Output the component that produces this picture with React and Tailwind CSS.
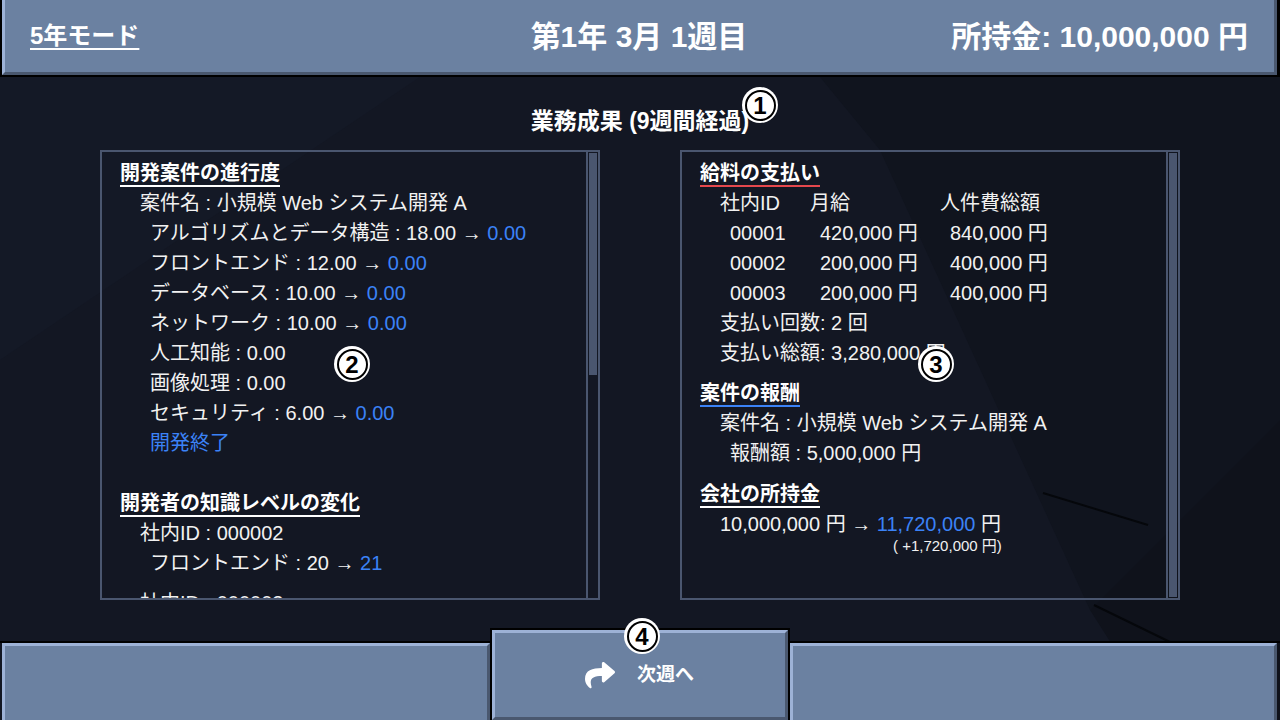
import { FaShare } from 'react-icons/fa';

const BLUE = 'text-[#3b82f6]';

function Heading({ children, line }) {
  return (
    <span className={`font-bold text-white underline decoration-2 underline-offset-[5px] ${line}`}>
      {children}
    </span>
  );
}

function Marker({ n, className }) {
  return (
    <div className={`absolute z-20 w-[36px] h-[36px] rounded-full bg-white flex items-center justify-center ${className}`}>
      <div className="w-[31px] h-[31px] rounded-full border-[2.5px] border-black flex items-center justify-center text-black font-bold text-[24px] leading-none pt-[1px]">
        {n}
      </div>
    </div>
  );
}

function Scrollbar({ thumb }) {
  return (
    <div className="w-[12px] border-l-2 border-[#4a566f] p-[1px] flex flex-col">
      <div className={`bg-[#4a566f] ${thumb}`}></div>
    </div>
  );
}

export default function App() {
  return (
    <div className="relative w-[1280px] h-[720px] overflow-hidden bg-[#131723] font-['Liberation_Sans','Noto_Sans_CJK_JP',sans-serif] flex flex-col">
      {/* background shapes */}
      <svg className="absolute inset-0 z-0" width="1280" height="720" viewBox="0 0 1280 720">
        <polygon points="820,77 1280,77 1280,420 1090,610 880,150" fill="#10141e" />
        <polygon points="1090,610 1280,420 1280,720 1160,720" fill="#0f121b" />
        <polygon points="0,77 420,77 0,360" fill="#141926" />
        <line x1="1043" y1="493" x2="1148" y2="525" stroke="#05070b" strokeWidth="2" />
        <line x1="1094" y1="605" x2="1170" y2="642" stroke="#05070b" strokeWidth="2" />
      </svg>

      {/* header */}
      <div className="relative z-10 h-[77px] bg-black pl-[2px] pr-[3px] pb-[2px]">
        <div className="h-full bg-[#6b81a1] border-l-[3px] border-l-[#9db2d6] border-r-[3px] border-r-[#4a586f] border-b-[3px] border-b-[#4a586f] grid grid-cols-3 items-center pl-[25px] pr-[26px] text-white font-bold">
          <span className="justify-self-start text-[24px] underline decoration-2 underline-offset-[4px]">5年モード</span>
          <span className="justify-self-center text-[30px]">第1年 3月 1週目</span>
          <span className="justify-self-end text-[30px]">所持金: 10,000,000 円</span>
        </div>
      </div>

      {/* main */}
      <div className="relative z-10 flex-1 flex flex-col items-center">
        <div className="mt-[30px] text-[23px] leading-[28px] font-bold text-white">業務成果 (9週間経過)</div>

        <div className="mt-[15px] flex gap-[80px]">
          {/* 開発案件 */}
          <div className="w-[500px] h-[450px] border-2 border-[#4a566f] flex">
            <div className="flex-1 overflow-hidden pl-[18px] pt-[6px] text-[20px] leading-[30px] text-[#f1f1f1]">
              <div><Heading line="decoration-white">開発案件の進行度</Heading></div>
              <div className="pl-[20px]">案件名 : 小規模 Web システム開発 A</div>
              <div className="pl-[30px]">アルゴリズムとデータ構造 : 18.00 → <span className={BLUE}>0.00</span></div>
              <div className="pl-[30px]">フロントエンド : 12.00 → <span className={BLUE}>0.00</span></div>
              <div className="pl-[30px]">データベース : 10.00 → <span className={BLUE}>0.00</span></div>
              <div className="pl-[30px]">ネットワーク : 10.00 → <span className={BLUE}>0.00</span></div>
              <div className="pl-[30px]">人工知能 : 0.00</div>
              <div className="pl-[30px]">画像処理 : 0.00</div>
              <div className="pl-[30px]">セキュリティ : 6.00 → <span className={BLUE}>0.00</span></div>
              <div className={`pl-[30px] ${BLUE}`}>開発終了</div>
              <div className="mt-[30px]"><Heading line="decoration-white">開発者の知識レベルの変化</Heading></div>
              <div className="pl-[20px]">社内ID : 000002</div>
              <div className="pl-[30px]">フロントエンド : 20 → <span className={BLUE}>21</span></div>
              <div className="pl-[20px] mt-[10px]">社内ID : 000003</div>
              <div className="pl-[30px]">フロントエンド : 10 → <span className={BLUE}>11</span></div>
            </div>
            <Scrollbar thumb="h-[222px]" />
          </div>

          {/* 支払い */}
          <div className="w-[500px] h-[450px] border-2 border-[#4a566f] flex">
            <div className="flex-1 overflow-hidden pl-[18px] pt-[6px] text-[20px] leading-[30px] text-[#f1f1f1]">
              <div><Heading line="decoration-[#e5484d]">給料の支払い</Heading></div>
              <div className="pl-[20px] grid grid-cols-[90px_130px_1fr]">
                <span>社内ID</span>
                <span>月給</span>
                <span>人件費総額</span>
                <span className="pl-[10px]">00001</span>
                <span className="pl-[10px]">420,000 円</span>
                <span className="pl-[10px]">840,000 円</span>
                <span className="pl-[10px]">00002</span>
                <span className="pl-[10px]">200,000 円</span>
                <span className="pl-[10px]">400,000 円</span>
                <span className="pl-[10px]">00003</span>
                <span className="pl-[10px]">200,000 円</span>
                <span className="pl-[10px]">400,000 円</span>
              </div>
              <div className="pl-[20px]">支払い回数: 2 回</div>
              <div className="pl-[20px]">支払い総額: 3,280,000 円</div>
              <div className="mt-[10px]"><Heading line="decoration-[#3b82f6]">案件の報酬</Heading></div>
              <div className="pl-[20px]">案件名 : 小規模 Web システム開発 A</div>
              <div className="pl-[30px]">報酬額 : 5,000,000 円</div>
              <div className="mt-[11px]"><Heading line="decoration-white">会社の所持金</Heading></div>
              <div className="pl-[20px]">10,000,000 円 → <span className={BLUE}>11,720,000</span> 円</div>
              <div className="pl-[193px] text-[15px] leading-[14px]">( +1,720,000 円)</div>
            </div>
            <Scrollbar thumb="flex-1" />
          </div>
        </div>
      </div>

      {/* footer */}
      <div className="relative z-10 h-[92px] flex items-end">
        <div className="flex-1 h-[79px] border-t-2 border-black pl-[2px]">
          <div className="h-full bg-[#6b81a1] border-t-[3px] border-l-[3px] border-[#9db2d6] border-r-[3px] border-r-[#4a586f]"></div>
        </div>
        <div className="w-[300px] h-[92px] border-t-2 border-x-2 border-black">
          <div className="h-full bg-[#6b81a1] border-t-[3px] border-l-[3px] border-[#9db2d6] border-r-[3px] border-r-[#4a586f] border-b-[3px] border-b-[#4a586f] flex items-center justify-center gap-[22px] text-white">
            <FaShare className="w-[30px] h-[30px]" />
            <span className="text-[19px] font-bold">次週へ</span>
          </div>
        </div>
        <div className="flex-1 h-[79px] border-t-2 border-black pr-[3px]">
          <div className="h-full bg-[#6b81a1] border-t-[3px] border-l-[3px] border-[#9db2d6] border-r-[3px] border-r-[#4a586f]"></div>
        </div>
      </div>

      <Marker n="1" className="left-[742px] top-[87px]" />
      <Marker n="2" className="left-[334px] top-[346px]" />
      <Marker n="3" className="left-[918px] top-[346px]" />
      <Marker n="4" className="left-[624px] top-[618px]" />
    </div>
  );
}
